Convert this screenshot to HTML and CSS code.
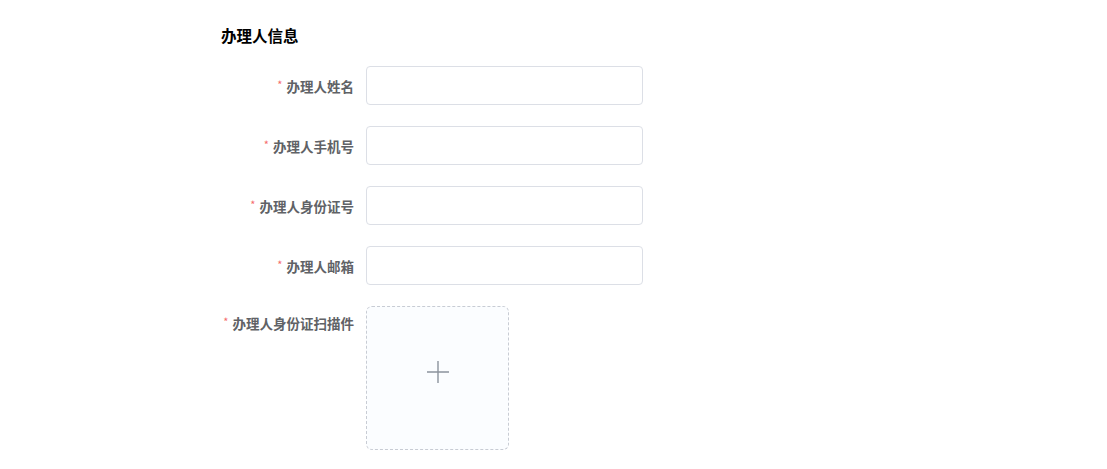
FILE: index.html
```html
<html>
<head>
    <title>办理人信息</title>
<link rel="stylesheet" href="styles.css">
</head>
<body>
<div id="stage">
    <h3 class="section-title">办理人信息</h3>

    <form class="info-form">
        <div class="form-item">
            <label class="form-label"><span class="req">*</span>办理人姓名</label>
            <input class="form-input" type="text">
        </div>
        <div class="form-item">
            <label class="form-label"><span class="req">*</span>办理人手机号</label>
            <input class="form-input" type="text">
        </div>
        <div class="form-item">
            <label class="form-label"><span class="req">*</span>办理人身份证号</label>
            <input class="form-input" type="text">
        </div>
        <div class="form-item">
            <label class="form-label"><span class="req">*</span>办理人邮箱</label>
            <input class="form-input" type="text">
        </div>
        <div class="form-item">
            <label class="form-label label-top"><span class="req">*</span>办理人身份证扫描件</label>
            <div class="upload-card">
                <svg class="plus" width="24" height="24" viewBox="0 0 24 24">
                    <path d="M12 1 V23 M1 12 H23" stroke="#8c939d" stroke-width="1.4" fill="none"/>
                </svg>
            </div>
        </div>
    </form>
</div>
</body>
</html>
```

FILE: styles.css
```css
body {
    margin: 0;
    background: #fff;
    font-family: "Noto Sans CJK SC", "Noto Sans", sans-serif;
}
#stage {
    padding-left: 221px;
    padding-top: 24px;
}
.section-title {
    margin: 0;
    font-size: 15.5px;
    line-height: 22px;
    font-weight: bold;
    color: #000;
}
.info-form {
    margin-top: 20px;
}
.form-item {
    display: flex;
    align-items: flex-start;
    margin-bottom: 21px;
}
.form-label {
    width: 145px;
    height: 39px;
    box-sizing: border-box;
    padding-right: 12px;
    display: flex;
    justify-content: flex-end;
    align-items: center;
    font-size: 13.5px;
    font-weight: bold;
    color: #606266;
}
.label-top {
    height: 33px;
}
.req {
    color: #f56c6c;
    font-weight: normal;
    margin-right: 4px;
    font-size: 11px;
    position: relative;
    top: -2px;
}
.form-input {
    width: 277px;
    height: 39px;
    box-sizing: border-box;
    border: 1px solid #dcdfe6;
    border-radius: 4px;
    padding: 0 15px;
    outline: none;
    font-size: 14px;
}
.upload-card {
    width: 143px;
    height: 144px;
    box-sizing: border-box;
    border: 1px dashed #c8ccd4;
    border-radius: 6px;
    background: #fbfdff;
    display: flex;
    align-items: center;
    justify-content: center;
}
.plus {
    margin-bottom: 12px;
}
```
